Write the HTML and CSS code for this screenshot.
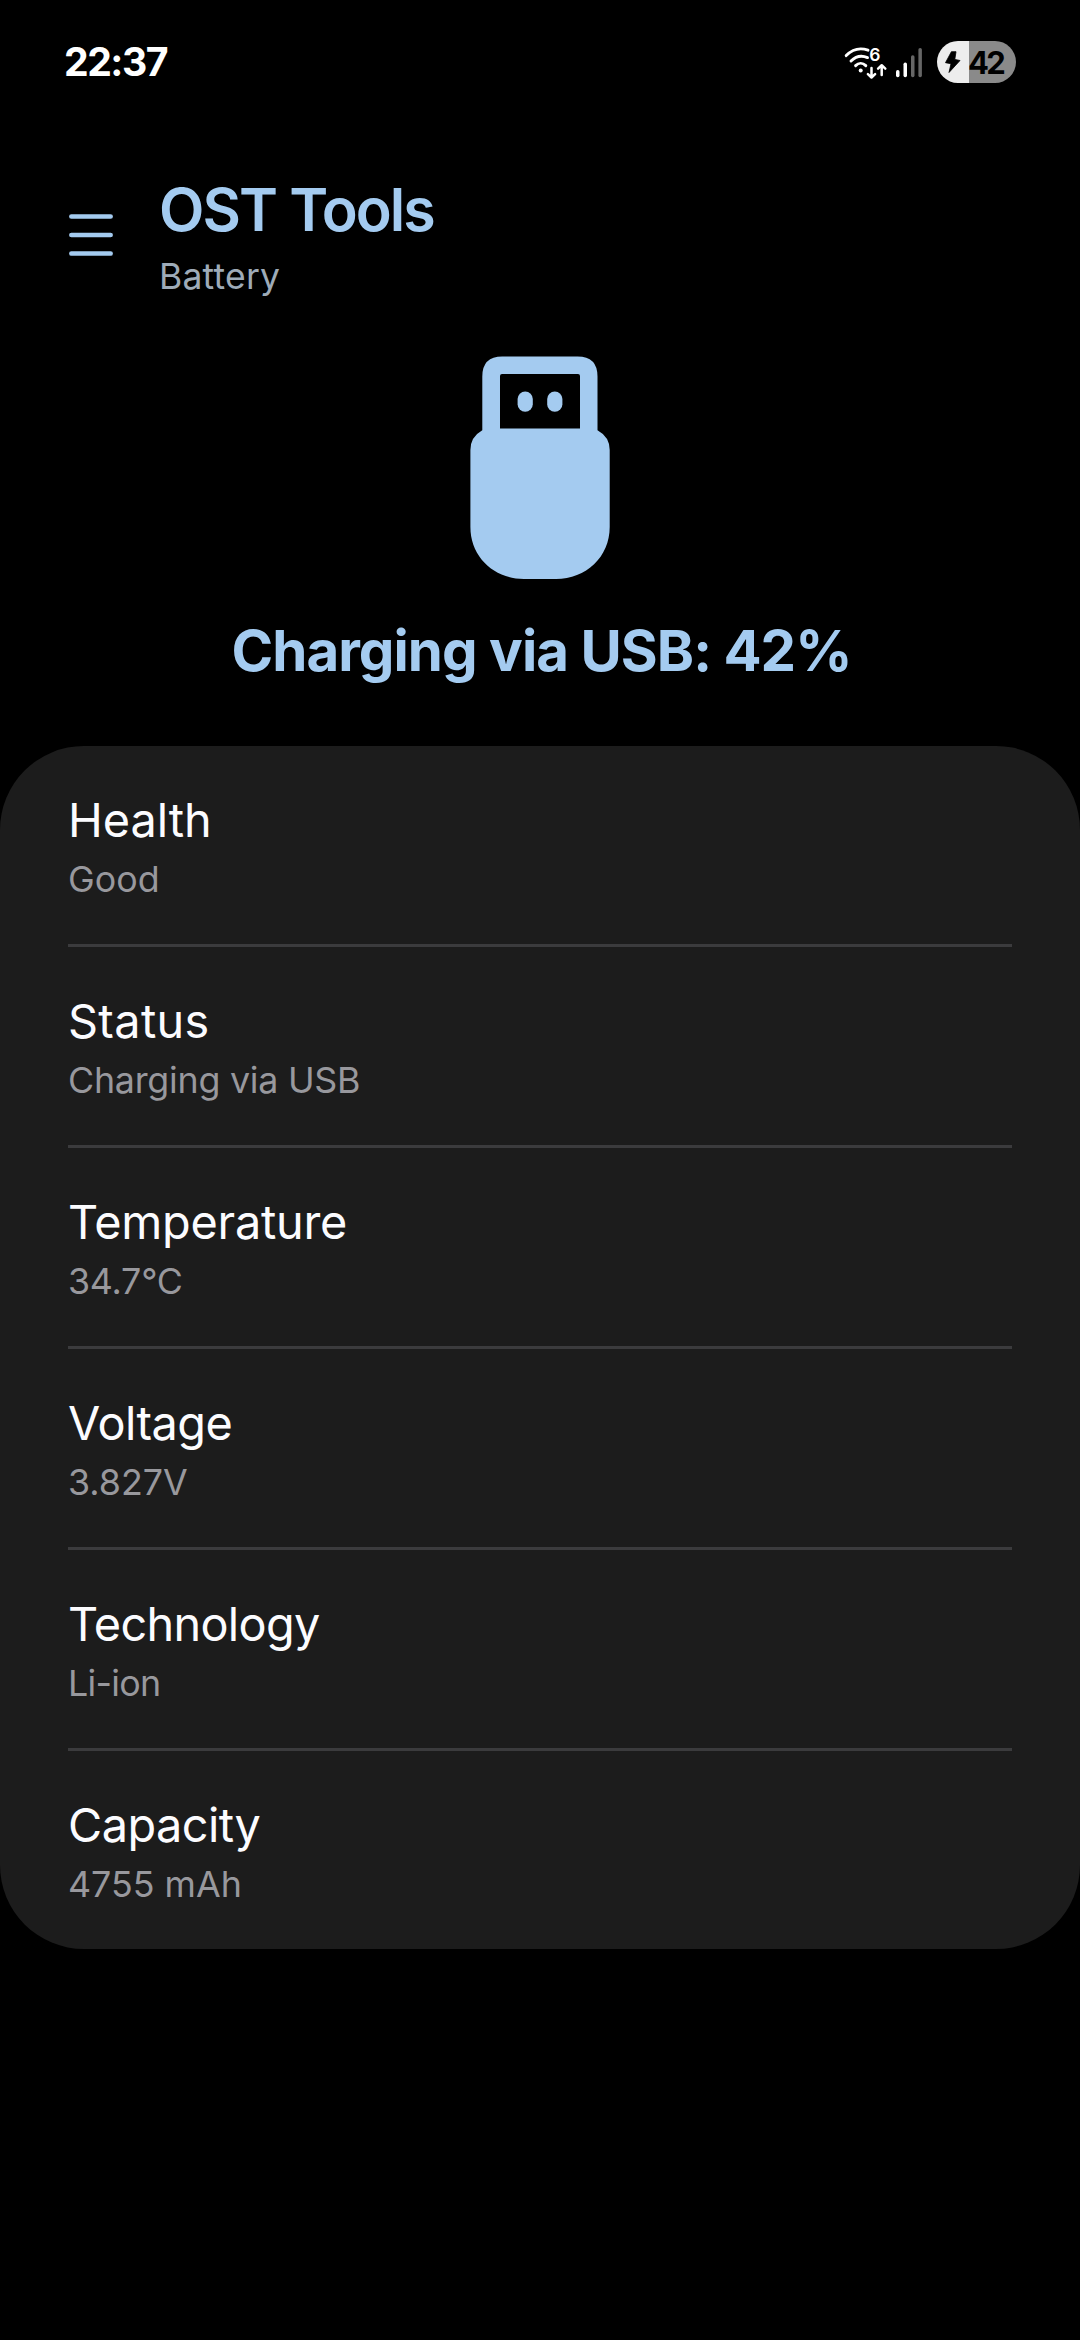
FILE: index.html
```html
<!DOCTYPE html>
<html lang="en">
<head>
<meta charset="utf-8">
<title>OST Tools</title>
<link rel="stylesheet" href="styles.css">
</head>
<body>
<div class="status-bar">
  <span class="clock">22:37</span>
  <div class="status-icons">
    <svg class="network" width="82" height="42" viewBox="844 41 82 42" aria-hidden="true">
      <g fill="none" stroke="#fff" stroke-width="2.9" stroke-linecap="round" stroke-linejoin="round">
        <path d="M846.2 55.6C852.5 49.2 860.5 47.6 868 50.2"/>
        <path d="M851 61C856 56 862 55.2 867.5 57.6"/>
        <path d="M855.6 65.6C858.6 62.6 862.8 62.6 865.8 65.6"/>
        <path d="M871.5 68V77M867.9 74.2L871.5 77.5L875.1 74.2" stroke-width="2.5"/>
        <path d="M881.7 75V66M878.1 68.6L881.7 65.2L885.3 68.6" stroke-width="2.5"/>
      </g>
      <circle cx="860.7" cy="70.4" r="2" fill="#fff"/>
      <text class="wifi-gen" x="869.2" y="61.4">6</text>
      <g fill="#fff">
        <rect x="896" y="70" width="3.5" height="7.2" rx="1.7"/>
        <rect x="903.5" y="62.5" width="3.5" height="14.7" rx="1.7"/>
        <rect x="911" y="55.3" width="3.5" height="21.9" rx="1.7" fill="#666"/>
        <rect x="918.4" y="48" width="3.5" height="29.2" rx="1.7" fill="#666"/>
      </g>
    </svg>
    <div class="battery">
      <svg class="bolt" width="16" height="22" viewBox="945 50.5 16 22" aria-hidden="true">
        <path d="M951.4 51.2H956L954.8 58.9L960 60L949 72L951 63.2L945.5 62.2Z" fill="#000" stroke="#000" stroke-width=".8" stroke-linejoin="round"/>
      </svg>
      <span class="battery-level">42</span>
    </div>
  </div>
</div>

<header class="app-bar">
  <svg class="menu" width="44" height="42" viewBox="0 0 44 42" aria-label="Menu">
    <path d="M2.4 2.5H41.6M2.4 21H41.6M2.4 39.5H41.6" stroke="#a4cbf0" stroke-width="4.7" stroke-linecap="round"/>
  </svg>
  <div class="headings">
    <h1 class="app-title">OST Tools</h1>
    <p class="app-subtitle">Battery</p>
  </div>
</header>

<section class="summary">
  <svg width="140" height="223" viewBox="470 356 140 223" aria-hidden="true">
    <g fill="#a4cbf0">
      <path fill-rule="evenodd" d="M482.3 430.3V376.4Q482.3 356.4 502.3 356.4H577.5Q597.5 356.4 597.5 376.4V430.3Q609.7 437 609.7 450V527C609.7 557 586 579 556 579H524C494 579 470.4 557 470.4 527V450Q470.4 437 482.3 430.3ZM502 374Q500 374 500 376V428.4H580V376Q580 374 578 374Z"/>
      <rect x="517.6" y="391.5" width="15.2" height="20.3" rx="7.6"/>
      <rect x="547.2" y="391.5" width="15.2" height="20.3" rx="7.6"/>
    </g>
  </svg>
  <h2 class="summary-text">Charging via USB: 42%</h2>
</section>

<main class="card">
  <div class="row"><span class="label">Health</span><span class="value">Good</span></div>
  <div class="row"><span class="label loose">Status</span><span class="value snug">Charging via USB</span></div>
  <div class="row"><span class="label snug">Temperature</span><span class="value snug">34.7°C</span></div>
  <div class="row"><span class="label tight">Voltage</span><span class="value">3.827V</span></div>
  <div class="row"><span class="label tighter">Technology</span><span class="value tighter">Li-ion</span></div>
  <div class="row"><span class="label tight">Capacity</span><span class="value">4755 mAh</span></div>
</main>
</body>
</html>
```
FILE: styles.css
```css
* { box-sizing: border-box; }

body {
  margin: 0;
  min-height: 2340px;
  background: #000;
  color: #fcfcff;
  font-family: Inter, "Liberation Sans", sans-serif;
}

h1, h2, p { margin: 0; }
svg { display: block; }

.status-bar {
  display: flex;
  align-items: center;
  justify-content: space-between;
  height: 124px;
  padding: 0 64px;
}

.clock {
  padding-bottom: 2px;
  font-size: 39.2px;
  font-weight: 700;
  letter-spacing: -1.5px;
  color: #fff;
}

.status-icons { display: flex; align-items: center; gap: 11px; }

.wifi-gen { font-size: 17.5px; font-weight: 600; fill: #fff; }

.battery {
  display: flex;
  align-items: center;
  width: 79px;
  height: 42px;
  padding-left: 8px;
  border-radius: 21px;
  background: linear-gradient(to right, #ededed 32px, #8a8a8a 32px);
}

.battery-level {
  padding: 1px 0 0 7px;
  color: #000;
  font-size: 31px;
  font-weight: 700;
  line-height: 42px;
  letter-spacing: -2.6px;
}

.app-bar {
  display: flex;
  gap: 46px;
  height: 232px;
  padding: 49px 69px 0;
}

.menu { margin-top: 41px; }

.app-title {
  color: #a4cbf0;
  font-size: 59.1px;
  font-weight: 600;
  line-height: 73px;
  letter-spacing: -1.9px;
}

.app-subtitle {
  margin-top: 9px;
  color: #9eabb8;
  font-size: 35.5px;
  line-height: 44px;
  letter-spacing: 0.22px;
}

.summary {
  display: flex;
  flex-direction: column;
  align-items: center;
  gap: 36px;
  height: 390px;
}

.summary-text {
  padding-left: 3px;
  color: #a4cbf0;
  font-size: 56.4px;
  font-weight: 700;
  line-height: 71px;
  letter-spacing: -0.95px;
}

.card {
  padding: 0 68px;
  border-radius: 84px;
  background: #1c1c1c;
}

.row {
  display: flex;
  flex-direction: column;
  gap: 9px;
  padding: 46px 0 43px;
}

.row + .row { border-top: 3px solid #3b3b3d; }

.label { font-size: 46.8px; line-height: 56px; }
.value { color: #98989d; font-size: 35.8px; line-height: 44px; }

.loose { letter-spacing: 0.35px; }
.snug { letter-spacing: -0.24px; }
.tight { letter-spacing: -0.52px; }
.tighter { letter-spacing: -0.68px; }
```
